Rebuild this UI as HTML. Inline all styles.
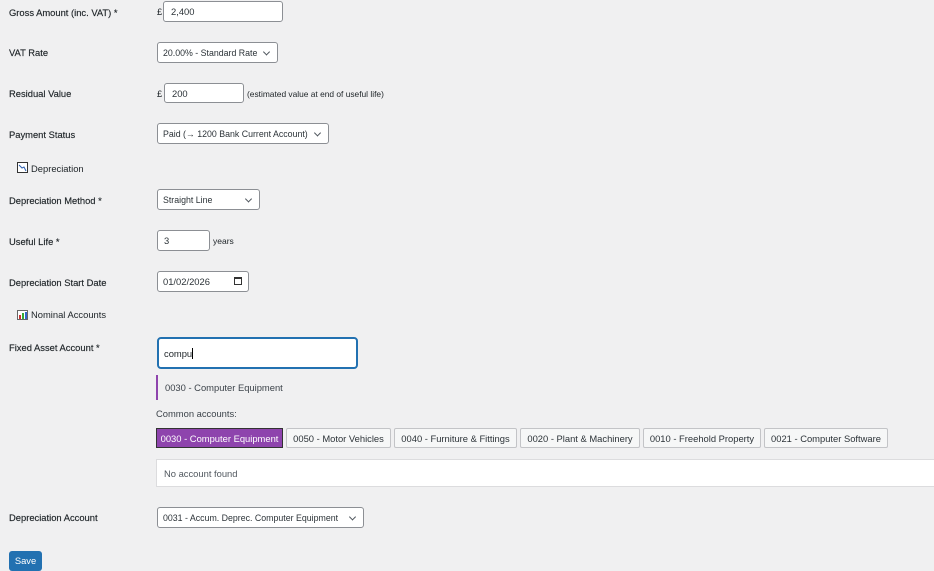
<!DOCTYPE html>
<html><head><style>
body{margin:0;width:934px;height:567px;background:#f0f0f1;font-family:"Liberation Sans",sans-serif;font-size:9.4px;color:#1d2327;position:relative;overflow:hidden}
.a{position:absolute;white-space:nowrap}
.lbl{left:9px;color:#1d2327;-webkit-text-stroke:0.15px #1d2327}
.in{position:absolute;background:#fff;border:1px solid #8c8f94;border-radius:3px;box-sizing:border-box;padding-left:7px;display:flex;align-items:center;color:#2c3338}
.sel{font-size:8.8px}
.sel::after{content:"";position:absolute;right:8px;top:50%;width:4px;height:4px;border-right:1px solid #50575e;border-bottom:1px solid #50575e;transform:translateY(-70%) rotate(45deg)}
.btn{position:absolute;top:428px;height:20px;box-sizing:border-box;border:1px solid #c3c4c7;background:#f6f7f7;border-radius:2px;display:flex;align-items:center;justify-content:center;color:#2c3338}
</style></head><body>
<div class="a lbl" style="top:7px">Gross Amount (inc. VAT) *</div>
<div class="a" style="left:157px;top:6px">£</div>
<div class="in" style="left:163px;top:1px;width:120px;height:21px">2,400</div>
<div class="a lbl" style="top:47px">VAT Rate</div>
<div class="in sel" style="left:157px;top:42px;width:121px;height:21px;padding-left:5px">20.00% - Standard Rate</div>
<div class="a lbl" style="top:88px">Residual Value</div>
<div class="a" style="left:157px;top:88px">£</div>
<div class="in" style="left:164px;top:83px;width:80px;height:20px">200</div>
<div class="a" style="left:247px;top:89px;font-size:8.4px">(estimated value at end of useful life)</div>
<div class="a lbl" style="top:129px">Payment Status</div>
<div class="in sel" style="left:157px;top:123px;width:172px;height:21px;padding-left:5px">Paid (→ 1200 Bank Current Account)</div>
<svg class="a" style="left:17px;top:162px" width="11" height="11"><rect x=".5" y=".5" width="10" height="10" fill="#fff" stroke="#333"/><path d="M2 3 L5 6 L7 5 L9 9" stroke="#2a5db0" fill="none"/></svg>
<div class="a" style="left:31px;top:163px">Depreciation</div>
<div class="a lbl" style="top:195px">Depreciation Method *</div>
<div class="in sel" style="left:157px;top:189px;width:103px;height:21px;padding-left:5px">Straight Line</div>
<div class="a lbl" style="top:236px">Useful Life *</div>
<div class="in" style="left:157px;top:230px;width:53px;height:21px;padding-left:6px">3</div>
<div class="a" style="left:213px;top:236px;font-size:8.5px">years</div>
<div class="a lbl" style="top:277px">Depreciation Start Date</div>
<div class="in" style="left:157px;top:271px;width:92px;height:21px;padding-left:5px">01/02/2026<span style="position:absolute;right:6px;top:5px;width:8px;height:8px;border:1px solid #333;border-top-width:2px;box-sizing:border-box"></span></div>
<svg class="a" style="left:17px;top:310px" width="11" height="10"><rect x=".5" y=".5" width="10" height="9" fill="#fff" stroke="#666"/><rect x="2" y="5" width="2" height="4" fill="#c33"/><rect x="5" y="3" width="2" height="6" fill="#3a3"/><rect x="8" y="2" width="2" height="7" fill="#36c"/></svg>
<div class="a" style="left:31px;top:309px">Nominal Accounts</div>
<div class="a lbl" style="top:342px">Fixed Asset Account *</div>
<div class="in" style="left:157px;top:337px;width:201px;height:32px;border:2px solid #2271b1;border-radius:4px;padding-left:5px;color:#1d2327">compu<span style="display:inline-block;width:1px;height:11px;background:#000"></span></div>
<div class="a" style="left:156px;top:375px;width:2px;height:25px;background:#8e44ad"></div>
<div class="a" style="left:165px;top:382px;color:#3c434a">0030 - Computer Equipment</div>
<div class="a" style="left:156px;top:408px;color:#3c434a">Common accounts:</div>
<div class="btn" style="left:156px;width:127px;background:#8e44ad;border-color:#333;color:#fff;border-radius:0">0030 - Computer Equipment</div>
<div class="btn" style="left:286px;width:105px">0050 - Motor Vehicles</div>
<div class="btn" style="left:394px;width:123px">0040 - Furniture &amp; Fittings</div>
<div class="btn" style="left:520px;width:120px">0020 - Plant &amp; Machinery</div>
<div class="btn" style="left:643px;width:118px">0010 - Freehold Property</div>
<div class="btn" style="left:764px;width:124px">0021 - Computer Software</div>
<div class="a" style="left:156px;top:459px;width:790px;height:28px;background:#fff;border:1px solid #dcdcde;box-sizing:border-box"></div>
<div class="a" style="left:164px;top:468px;color:#50575e">No account found</div>
<div class="a lbl" style="top:512px">Depreciation Account</div>
<div class="in sel" style="left:157px;top:507px;width:207px;height:21px;padding-left:5px">0031 - Accum. Deprec. Computer Equipment</div>
<div class="a" style="left:9px;top:551px;width:33px;height:20px;background:#2271b1;border-radius:3px;color:#fff;text-align:center;line-height:19px">Save</div>
</body></html>
